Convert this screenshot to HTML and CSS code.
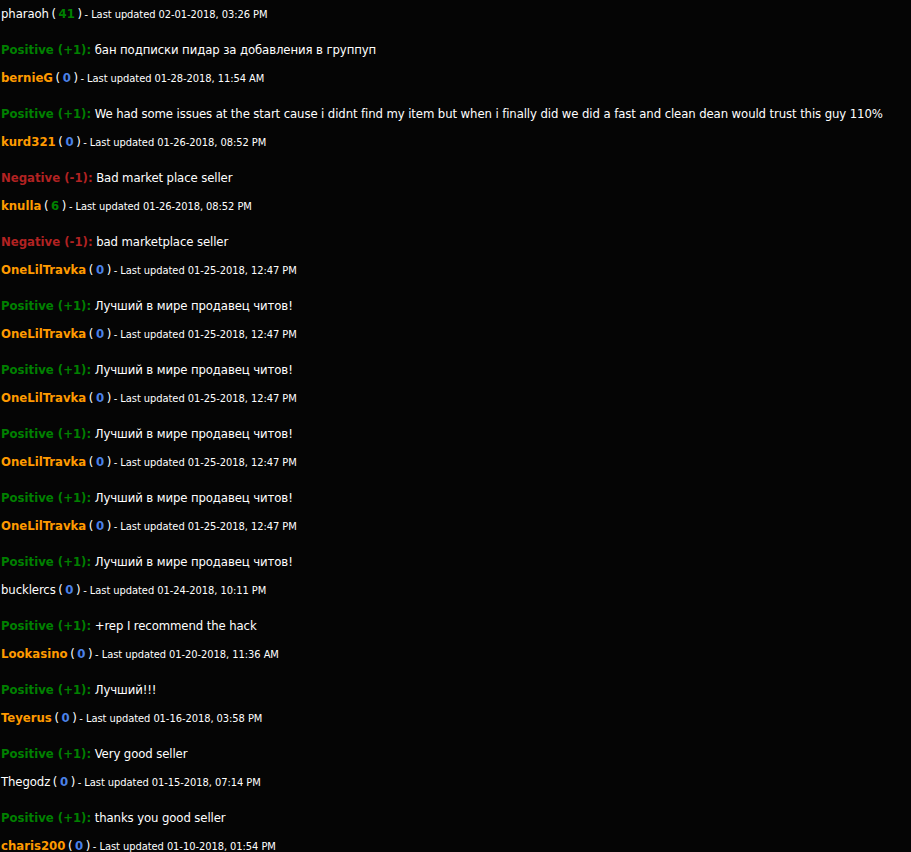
FILE: index.html
```html
<!DOCTYPE html>
<html>
<head>
<meta charset="utf-8">
<link rel="stylesheet" href="styles.css">
</head>
<body>
<div class="list">
  <div class="entry">
    <div class="who"><span class="user plain">pharaoh</span> ( <span class="rep pos">41</span> ) <span class="meta">- Last updated 02-01-2018, 03:26 PM</span></div>
    <div class="fb"><span class="type pos">Positive (+1):</span> бан подписки пидар за добавления в группуп</div>
  </div>
  <div class="entry">
    <div class="who"><span class="user">bernieG</span> ( <span class="rep zero">0</span> ) <span class="meta">- Last updated 01-28-2018, 11:54 AM</span></div>
    <div class="fb"><span class="type pos">Positive (+1):</span> We had some issues at the start cause i didnt find my item but when i finally did we did a fast and clean dean would trust this guy 110%</div>
  </div>
  <div class="entry">
    <div class="who"><span class="user">kurd321</span> ( <span class="rep zero">0</span> ) <span class="meta">- Last updated 01-26-2018, 08:52 PM</span></div>
    <div class="fb"><span class="type neg">Negative (-1):</span> Bad market place seller</div>
  </div>
  <div class="entry">
    <div class="who"><span class="user">knulla</span> ( <span class="rep pos">6</span> ) <span class="meta">- Last updated 01-26-2018, 08:52 PM</span></div>
    <div class="fb"><span class="type neg">Negative (-1):</span> bad marketplace seller</div>
  </div>
  <div class="entry">
    <div class="who"><span class="user">OneLilTravka</span> ( <span class="rep zero">0</span> ) <span class="meta">- Last updated 01-25-2018, 12:47 PM</span></div>
    <div class="fb"><span class="type pos">Positive (+1):</span> Лучший в мире продавец читов!</div>
  </div>
  <div class="entry">
    <div class="who"><span class="user">OneLilTravka</span> ( <span class="rep zero">0</span> ) <span class="meta">- Last updated 01-25-2018, 12:47 PM</span></div>
    <div class="fb"><span class="type pos">Positive (+1):</span> Лучший в мире продавец читов!</div>
  </div>
  <div class="entry">
    <div class="who"><span class="user">OneLilTravka</span> ( <span class="rep zero">0</span> ) <span class="meta">- Last updated 01-25-2018, 12:47 PM</span></div>
    <div class="fb"><span class="type pos">Positive (+1):</span> Лучший в мире продавец читов!</div>
  </div>
  <div class="entry">
    <div class="who"><span class="user">OneLilTravka</span> ( <span class="rep zero">0</span> ) <span class="meta">- Last updated 01-25-2018, 12:47 PM</span></div>
    <div class="fb"><span class="type pos">Positive (+1):</span> Лучший в мире продавец читов!</div>
  </div>
  <div class="entry">
    <div class="who"><span class="user">OneLilTravka</span> ( <span class="rep zero">0</span> ) <span class="meta">- Last updated 01-25-2018, 12:47 PM</span></div>
    <div class="fb"><span class="type pos">Positive (+1):</span> Лучший в мире продавец читов!</div>
  </div>
  <div class="entry">
    <div class="who"><span class="user plain">bucklercs</span> ( <span class="rep zero">0</span> ) <span class="meta">- Last updated 01-24-2018, 10:11 PM</span></div>
    <div class="fb"><span class="type pos">Positive (+1):</span> +rep I recommend the hack</div>
  </div>
  <div class="entry">
    <div class="who"><span class="user">Lookasino</span> ( <span class="rep zero">0</span> ) <span class="meta">- Last updated 01-20-2018, 11:36 AM</span></div>
    <div class="fb"><span class="type pos">Positive (+1):</span> Лучший!!!</div>
  </div>
  <div class="entry">
    <div class="who"><span class="user">Teyerus</span> ( <span class="rep zero">0</span> ) <span class="meta">- Last updated 01-16-2018, 03:58 PM</span></div>
    <div class="fb"><span class="type pos">Positive (+1):</span> Very good seller</div>
  </div>
  <div class="entry">
    <div class="who"><span class="user plain">Thegodz</span> ( <span class="rep zero">0</span> ) <span class="meta">- Last updated 01-15-2018, 07:14 PM</span></div>
    <div class="fb"><span class="type pos">Positive (+1):</span> thanks you good seller</div>
  </div>
  <div class="entry last">
    <div class="who"><span class="user">charis200</span> ( <span class="rep zero">0</span> ) <span class="meta">- Last updated 01-10-2018, 01:54 PM</span></div>
  </div>
</div>
</body>
</html>
```
FILE: styles.css
```css
html, body {
  margin: 0;
  padding: 0;
  background: #050505;
}
body {
  color: #ffffff;
  font-family: Tahoma, "DejaVu Sans Condensed", "DejaVu Sans", sans-serif;
  font-size: 13px;
  letter-spacing: -0.1px;
  overflow: hidden;
  height: 852px;
}
.list {
  display: flex;
  flex-direction: column;
  padding-left: 1px;
}
.entry {
  display: flex;
  flex-direction: column;
  height: 64px;
}
.entry.last {
  height: 28px;
}
.who {
  height: 28px;
  line-height: 28px;
  white-space: nowrap;
  word-spacing: -1px;
}
.fb {
  margin-top: 8px;
  height: 28px;
  line-height: 28px;
  white-space: nowrap;
}
.user {
  color: #ff9a00;
  font-weight: bold;
  letter-spacing: 0;
}
.user.plain {
  color: #ffffff;
  font-weight: normal;
  letter-spacing: -0.1px;
}
.rep {
  font-weight: bold;
  letter-spacing: 0;
}
.rep.pos { color: #008000; }
.rep.zero { color: #4b82e8; }
.meta {
  font-size: 11px;
  letter-spacing: -0.05px;
  word-spacing: 0;
}
.type {
  font-weight: bold;
  letter-spacing: 0;
}
.type.pos { color: #008000; }
.type.neg { color: #b22222; }
```
